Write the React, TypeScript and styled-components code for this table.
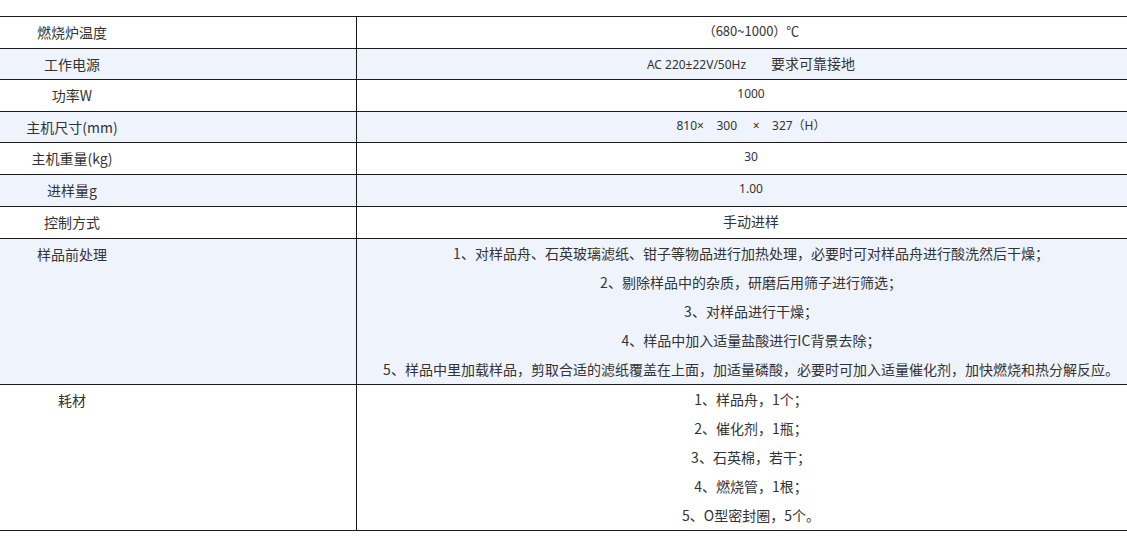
import React from "react";
import styled, { createGlobalStyle } from "styled-components";

const Global = createGlobalStyle`
  html, body { margin: 0; padding: 0; background: #fff; }
  body { overflow: hidden; font-family: "Noto Sans CJK SC", "Noto Sans", sans-serif; color: #333; }
`;

const Wrap = styled.div`
  width: 1127px;
  overflow: hidden;
  padding-top: 16px;
`;

const Table = styled.table`
  border-collapse: collapse;
  width: 1147px;
  margin-left: -1px;
  table-layout: fixed;
`;

const Row = styled.tr<{ $alt?: boolean }>`
  background: ${(p) => (p.$alt ? "#eff4fc" : "#ffffff")};
`;

const LabelCell = styled.td`
  width: 356px;
  border: 1px solid #1a1a1a;
  padding: 0;
  vertical-align: top;
`;

const Label = styled.div<{ $lh?: number }>`
  width: 144px;
  text-align: center;
  font-size: 14px;
  line-height: ${(p) => p.$lh ?? 31}px;
  color: #333;
`;

const ValueCell = styled.td`
  border: 1px solid #1a1a1a;
  padding: 0;
  vertical-align: top;
  text-align: center;
  color: #333;
`;

const Value = styled.div<{ $size?: number; $cjk?: boolean }>`
  font-size: ${(p) => p.$size ?? 12}px;
  line-height: 28px;
  font-family: ${(p) =>
    p.$cjk ? `"Noto Sans CJK SC", sans-serif` : `"Noto Sans", "Noto Sans CJK SC", sans-serif`};
`;

const Big = styled.span`
  font-size: 14px;
  font-family: "Noto Sans CJK SC", sans-serif;
`;

const Line = styled.div`
  font-size: 14px;
  line-height: 29px;
  font-family: "Noto Sans CJK SC", sans-serif;
  white-space: nowrap;
`;

const nb = (n: number) => "\u00a0".repeat(n);

const prep = [
  "1、对样品舟、石英玻璃滤纸、钳子等物品进行加热处理，必要时可对样品舟进行酸洗然后干燥；",
  "2、剔除样品中的杂质，研磨后用筛子进行筛选；",
  "3、对样品进行干燥；",
  "4、样品中加入适量盐酸进行IC背景去除；",
  "5、样品中里加载样品，剪取合适的滤纸覆盖在上面，加适量磷酸，必要时可加入适量催化剂，加快燃烧和热分解反应。",
];

const supplies = ["1、样品舟，1个；", "2、催化剂，1瓶；", "3、石英棉，若干；", "4、燃烧管，1根；", "5、O型密封圈，5个。"];

export default function App() {
  return (
    <>
      <Global />
      <Wrap>
        <Table>
          <tbody>
            <Row>
              <LabelCell><Label>燃烧炉温度</Label></LabelCell>
              <ValueCell><Value $size={13} $cjk>（680~1000）℃</Value></ValueCell>
            </Row>
            <Row $alt>
              <LabelCell><Label $lh={30}>工作电源</Label></LabelCell>
              <ValueCell>
                <Value>AC 220±22V/50Hz{nb(8)}<Big>要求可靠接地</Big></Value>
              </ValueCell>
            </Row>
            <Row>
              <LabelCell><Label>功率W</Label></LabelCell>
              <ValueCell><Value>1000</Value></ValueCell>
            </Row>
            <Row $alt>
              <LabelCell><Label $lh={30}>主机尺寸(mm)</Label></LabelCell>
              <ValueCell><Value>810×{nb(4)}300{nb(5)}×{nb(4)}327（H）</Value></ValueCell>
            </Row>
            <Row>
              <LabelCell><Label>主机重量(kg)</Label></LabelCell>
              <ValueCell><Value>30</Value></ValueCell>
            </Row>
            <Row $alt>
              <LabelCell><Label>进样量g</Label></LabelCell>
              <ValueCell><Value>1.00</Value></ValueCell>
            </Row>
            <Row>
              <LabelCell><Label>控制方式</Label></LabelCell>
              <ValueCell><Value $size={14} $cjk>手动进样</Value></ValueCell>
            </Row>
            <Row $alt>
              <LabelCell><Label>样品前处理</Label></LabelCell>
              <ValueCell>
                {prep.map((t) => (
                  <Line key={t}>{t}</Line>
                ))}
              </ValueCell>
            </Row>
            <Row>
              <LabelCell><Label>耗材</Label></LabelCell>
              <ValueCell>
                {supplies.map((t) => (
                  <Line key={t}>{t}</Line>
                ))}
              </ValueCell>
            </Row>
          </tbody>
        </Table>
      </Wrap>
    </>
  );
}
